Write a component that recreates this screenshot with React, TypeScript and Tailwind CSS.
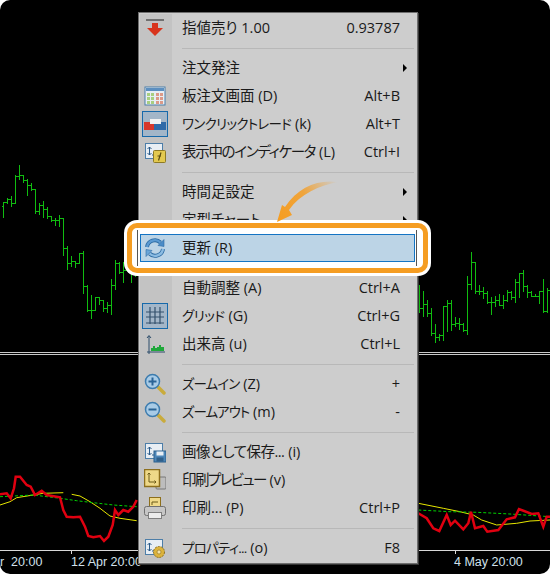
const FONT = { fontFamily: '"Open Sans", "Noto Sans CJK JP", sans-serif' };
const AXIS_FONT = { fontFamily: '"Liberation Sans", sans-serif' };

// [x in crop px, high, low, close] read off the chart, crop px are 3x
const LEFT_BARS = [
  [10, 155, 203, 157], [22, 145, 163, 148], [34, 138, 170, 161], [46, 76, 163, 78], [58, 45, 90, 76],
  [70, 76, 98, 90], [82, 88, 137, 105], [94, 100, 122, 118], [106, 118, 193, 183], [118, 160, 195, 165],
  [130, 153, 203, 178], [142, 172, 208, 200], [154, 198, 215, 212], [166, 205, 228, 210], [178, 196, 232, 205],
  [190, 205, 317, 295], [202, 288, 360, 340], [214, 318, 350, 335], [226, 335, 353, 340], [238, 310, 342, 310],
  [250, 303, 432, 408], [262, 405, 485, 482], [274, 435, 507, 482], [286, 441, 482, 442], [298, 441, 465, 450],
  [310, 450, 485, 475], [322, 456, 490, 466], [334, 388, 495, 406], [346, 330, 420, 340], [358, 337, 372, 367],
  [370, 336, 398, 362], [382, 350, 365, 362], [394, 362, 398, 365], [406, 360, 380, 370],
];
const RIGHT_BARS = [
  [28, 195, 278, 265], [40, 213, 290, 252], [52, 240, 292, 280], [64, 264, 348, 340], [76, 312, 368, 352],
  [88, 342, 362, 346], [100, 258, 362, 260], [112, 240, 335, 250], [124, 240, 332, 313], [136, 292, 322, 310],
  [148, 294, 330, 312], [160, 310, 335, 332], [172, 168, 345, 193], [184, 96, 210, 126], [196, 126, 222, 214],
  [208, 196, 226, 214], [220, 202, 238, 220], [232, 214, 252, 248], [244, 232, 285, 248], [256, 228, 260, 240],
  [268, 222, 258, 256], [280, 226, 267, 240], [292, 210, 245, 218], [304, 212, 240, 232], [316, 178, 250, 188],
  [328, 160, 235, 160], [340, 150, 215, 198], [352, 196, 234, 218], [364, 214, 232, 228], [376, 222, 232, 228],
  [388, 212, 252, 214], [400, 178, 280, 275], [412, 205, 280, 212],
];

const toLeft = (pts: number[][]) => pts.map(([x, y]) => `${(x / 3).toFixed(1)},${(460 + y / 3).toFixed(1)}`).join(" ");
const toRight = (pts: number[][]) => pts.map(([x, y]) => `${(410 + x / 3).toFixed(1)},${(460 + y / 3).toFixed(1)}`).join(" ");

function Bars({ data, ox, oy }: { data: number[][]; ox: number; oy: number }) {
  return (
    <g stroke="#10bc10" strokeWidth="1" fill="none" shapeRendering="crispEdges">
      {data.map(([x, hi, lo, close], i) => {
        const px = Math.floor(ox + x / 3) + 0.5;
        const open = i > 0 ? data[i - 1][3] : close + 12;
        return (
          <g key={x}>
            <path d={`M${px} ${oy + hi / 3}V${oy + lo / 3}`} />
            <path d={`M${px - 2} ${Math.floor(oy + open / 3) + 0.5}H${px}M${px} ${Math.floor(oy + close / 3) + 0.5}H${px + 2}`} />
          </g>
        );
      })}
    </g>
  );
}

function Chart() {
  return (
    <svg className="block" width="550" height="574" viewBox="0 0 550 574">
      <Bars data={LEFT_BARS} ox={0} oy={150} />
      <Bars data={RIGHT_BARS} ox={410} oy={220} />
      <path d="M0 352.5H550M0 354.5H550" stroke="#c8c8c8" strokeWidth="1" shapeRendering="crispEdges" />
      <g fill="none">
        <polyline points={toLeft([[0, 135], [30, 125], [50, 113], [100, 105], [130, 100], [190, 98]])} stroke="#e6e600" strokeWidth="1" />
        <polyline points={toLeft([[215, 103], [240, 108], [270, 125], [300, 145], [330, 168], [360, 175], [410, 182]])} stroke="#e6e600" strokeWidth="1" />
        <polyline points={toRight([[25, 130], [100, 145], [150, 155], [190, 165], [215, 180], [260, 195], [320, 190], [360, 183], [420, 180]])} stroke="#e6e600" strokeWidth="1" />
        <polyline points={toLeft([[0, 110], [100, 105], [180, 115], [230, 122], [280, 128], [340, 135], [410, 140]])} stroke="#00d000" strokeWidth="1" strokeDasharray="3 2" />
        <polyline points={toRight([[25, 150], [120, 155], [200, 157], [300, 162], [420, 170]])} stroke="#00d000" strokeWidth="1" strokeDasharray="3 2" />
        <polyline
          points={toLeft([[0, 103], [20, 100], [32, 115], [42, 85], [47, 50], [60, 50], [80, 75], [92, 80], [105, 105], [125, 92], [140, 105], [180, 112], [190, 150], [200, 170], [220, 172], [240, 170], [255, 200], [265, 228], [280, 232], [300, 228], [312, 243], [325, 230], [338, 195], [345, 150], [355, 165], [370, 150], [385, 155], [400, 140], [410, 120]])}
          stroke="#e00010"
          strokeWidth="2.5"
        />
        <polyline
          points={toRight([[25, 160], [50, 175], [70, 205], [88, 213], [110, 165], [122, 195], [135, 182], [160, 208], [175, 190], [183, 155], [195, 205], [220, 198], [232, 215], [265, 210], [290, 178], [315, 172], [327, 147], [365, 162], [385, 160], [400, 200], [410, 170], [420, 170]])}
          stroke="#e00010"
          strokeWidth="2.5"
        />
      </g>
      <path d="M0 550.5H550M71.5 550V554M455.5 550V554" stroke="#d8d8d8" strokeWidth="1" shapeRendering="crispEdges" />
    </svg>
  );
}

function Icon({ children, boxed = false }: { children?: React.ReactNode; boxed?: boolean }) {
  return (
    <div className={`flex h-[26px] w-[26px] items-center justify-center ${boxed ? "border border-[#1769aa] bg-[#a3b6c8]" : ""}`}>
      <svg width="22" height="22" viewBox="0 0 22 22">{children}</svg>
    </div>
  );
}

const SellIcon = () => (
  <>
    <path d="M2 3H20" stroke="#555" strokeWidth="1.5" />
    <path d="M8 6H14V11H19L11 19L3 11H8Z" fill="#d8341c" />
  </>
);
const DomIcon = () => (
  <>
    <rect x="1" y="2" width="20" height="18" fill="#e8eef4" stroke="#4d7ea8" />
    <rect x="2" y="3" width="18" height="3" fill="#5c8fc0" />
    <path d="M3 8h3v3h-3zM7 8h3v3h-3zM3 12h3v3h-3zM7 12h3v3h-3zM3 16h3v3h-3zM7 16h3v3h-3z" fill="#a8cf80" />
    <path d="M12 8h3v3h-3zM16 8h3v3h-3zM12 12h3v3h-3zM16 12h3v3h-3zM12 16h3v3h-3zM16 16h3v3h-3z" fill="#dc9a88" />
  </>
);
const OneClickIcon = () => (
  <>
    <rect x="0" y="9" width="10" height="8" fill="#d8382c" />
    <rect x="10" y="9" width="12" height="8" fill="#2f6aa8" />
    <rect x="6" y="6" width="11" height="5" fill="#f2f2f2" />
  </>
);
const ChartDoc = () => (
  <>
    <rect x="1.500" y="2.500" width="17" height="15" fill="#e8eef4" stroke="#4d7ea8" />
    <path d="M5.500 6V14M3.500 8L5.500 6L7.500 8M3.500 12L5.500 14L7.500 12M8 14H14" fill="none" stroke="#2a5a88" strokeWidth="1" />
  </>
);
const IndicatorIcon = () => (
  <>
    <ChartDoc />
    <rect x="9.500" y="9.500" width="12" height="12" rx="1" fill="#e3c94f" stroke="#8d7a26" />
    <path d="M17 11.500L14.500 19.500M13.500 15H17" stroke="#5c4d10" strokeWidth="1.200" fill="none" />
  </>
);
const RefreshIcon = () => (
  <g fill="none" strokeLinecap="butt">
    <path d="M3 10A8 8 0 0 1 16.500 5.500" stroke="#2b6aa2" strokeWidth="4" />
    <path d="M3 10A8 8 0 0 1 16.500 5.500" stroke="#5b9ad2" strokeWidth="2.400" />
    <path d="M14 8.500L20 2.500V9.500Z" fill="#4a8cc8" stroke="#2b6aa2" strokeWidth="0.600" />
    <path d="M19 12A8 8 0 0 1 5.500 16.500" stroke="#2b6aa2" strokeWidth="4" />
    <path d="M19 12A8 8 0 0 1 5.500 16.500" stroke="#8cbce2" strokeWidth="2.400" />
    <path d="M8 13.500L2 19.500V12.500Z" fill="#6aa6d8" stroke="#2b6aa2" strokeWidth="0.600" />
  </g>
);
const GridIcon = () => (
  <path d="M6 2V19M11 2V19M16 2V19M2 7H20M2 12H20M2 18H20" stroke="#34506c" strokeWidth="1.200" fill="none" />
);
const VolumeIcon = () => (
  <>
    <path d="M3 19H21M5 3V21M3 5L5 2.500L7 5" stroke="#2d4d6a" strokeWidth="1" fill="none" />
    <path d="M7 18V15H9V13H11V15H13V14H15V12H17V14H20V18Z" fill="#1fa83a" />
  </>
);
const ZoomIcon = ({ plus }: { plus?: boolean }) => (
  <>
    <path d="M13 13L20 20" stroke="#c9ab3c" strokeWidth="3.500" strokeLinecap="round" />
    <circle cx="8.500" cy="8.500" r="7" fill="#a8cbe6" stroke="#3d7cae" strokeWidth="1.500" />
    <path d={plus ? "M4.500 8.500H12.500M8.500 4.500V12.500" : "M4.500 8.500H12.500"} stroke="#2a6496" strokeWidth="2" />
  </>
);
const SaveIcon = () => (
  <>
    <ChartDoc />
    <rect x="10" y="10" width="12" height="11" fill="#4d86b8" stroke="#2b5f8c" />
    <rect x="12.500" y="10.500" width="7" height="4" fill="#e8eef4" />
    <rect x="12.500" y="16.500" width="7" height="4" fill="#2f5f8a" />
  </>
);
const PreviewIcon = () => (
  <>
    <rect x="12" y="8" width="10" height="12" rx="1" fill="#bdbdbd" stroke="#777" />
    <rect x="0.500" y="0.500" width="15" height="17" fill="#efd988" stroke="#8d6f1c" strokeWidth="1.500" />
    <path d="M5 4V13H12M3.500 5.500L5 4L6.500 5.500M10.500 11.500L12 13L10.500 14.500" stroke="#6b5a18" fill="none" />
  </>
);
const PrintIcon = () => (
  <>
    <rect x="5.500" y="0.500" width="11" height="11" fill="#efd988" stroke="#8d6f1c" />
    <path d="M8 5H14M8 5V8" stroke="#6b5a18" />
    <rect x="0.500" y="9.500" width="21" height="9" rx="2" fill="#c6c6c6" stroke="#707070" />
    <rect x="4.500" y="15.500" width="13" height="6" fill="#ececec" stroke="#7f7f7f" />
  </>
);
const PropsIcon = () => (
  <>
    <ChartDoc />
    <circle cx="15" cy="15" r="5.500" fill="#dcb33c" stroke="#8d6f1c" strokeDasharray="2 1" />
    <circle cx="15" cy="15" r="2" fill="#f3e3a8" stroke="#8d6f1c" strokeWidth="0.600" />
  </>
);

function Row({
  icon,
  label,
  right,
  arrow,
  boxed,
  tight = "",
}: {
  icon?: React.ReactNode;
  label: string;
  right?: string;
  arrow?: boolean;
  boxed?: boolean;
  tight?: string;
}) {
  // kana in the reference font run narrower, so only the Japanese part is tightened
  const [main, key] = label.split(" (");
  return (
    <div className="flex h-[28px] items-center">
      <div className="flex w-[31px] shrink-0 items-center justify-center">
        {icon && <Icon boxed={boxed}>{icon}</Icon>}
      </div>
      <span className="ml-[12px] flex-1 whitespace-nowrap">
        <span className={tight}>{main}</span>
        {key && ` (${key}`}
      </span>
      {right && <span className="mr-[17px] whitespace-nowrap">{right}</span>}
      {arrow && <span className="mr-[10px] h-0 w-0 border-y-[4px] border-l-[4px] border-y-transparent border-l-black" />}
    </div>
  );
}

function Sep({ h = "h-[12px]" }: { h?: string }) {
  return (
    <div className={`flex ${h} items-center pl-[43px] pr-[3px]`}>
      <div className="h-px w-full bg-[#b8b8b8]" />
    </div>
  );
}

function RefreshRow() {
  return (
    <div className="relative h-[28px]">
      {/* orange callout sits behind the selected row */}
      <div className="absolute left-[-12px] right-[-11px] top-[-11px] bottom-[-11px] rounded-[10px] border-[5px] border-[#f59d22] bg-white shadow-[0_0_0_3px_#ffffff]" />
      <div className="absolute inset-y-[-4px] left-[-2px] right-[0px] border-x border-[#555]" />
      <div className="absolute inset-y-0 left-[1px] right-[2px] border border-[#1474c4] bg-[#bcd4e6]" />
      <div className="relative">
        <Row icon={<RefreshIcon />} label="更新 (R)" />
      </div>
    </div>
  );
}

function Callout() {
  return (
    <svg className="absolute left-[131px] top-[162px]" width="74" height="56" viewBox="0 0 74 56">
      <defs>
        <linearGradient id="tail" x1="68" y1="7" x2="10" y2="45" gradientUnits="userSpaceOnUse">
          <stop offset="0" stopColor="#f59d22" stopOpacity="0" />
          <stop offset="0.5" stopColor="#f59d22" stopOpacity="0.85" />
          <stop offset="1" stopColor="#f59d22" />
        </linearGradient>
      </defs>
      <path d="M68 7C48 4 28 12 15 32L12 30L7 47L22 40L19 35C30 19 50 10 68 7Z" fill="url(#tail)" />
    </svg>
  );
}

export default function App() {
  return (
    <div className="h-[574px] w-[550px] overflow-hidden bg-white" style={FONT}>
      <div className="relative h-[574px] w-[550px] overflow-hidden rounded-[10px] bg-black">
        <Chart />
        <span className="absolute left-0 top-[553px] text-[12.5px] leading-[18px] text-[#d0e0ec]" style={AXIS_FONT}>r&nbsp;&nbsp;20:00</span>
        <span className="absolute left-[71px] top-[553px] whitespace-nowrap text-[12.5px] leading-[18px] text-[#d0e0ec]" style={AXIS_FONT}>12 Apr 20:00</span>
        <span className="absolute left-[454px] top-[553px] whitespace-nowrap text-[12.5px] leading-[18px] text-[#d0e0ec]" style={AXIS_FONT}>4 May 20:00</span>

        <div className="absolute left-[138px] top-[12px] h-[552px] w-[280px] border border-[#6e6e6e] bg-[#cdcdcd] pt-[1px] text-[14.5px] leading-none text-[#1a1a1a] [font-feature-settings:'palt'] shadow-[1px_1px_0_#333]">
          <div className="absolute inset-y-[1px] left-[1px] w-[32px] bg-[#c3c3c3]" />
          <div className="relative">
            <Row icon={<SellIcon />} label="指値売り 1.00" right="0.93787" />
            <Sep />
            <Row label="注文発注" arrow />
            <Row icon={<DomIcon />} label="板注文画面 (D)" right="Alt+B" />
            <Row icon={<OneClickIcon />} label="ワンクリックトレード (k)" right="Alt+T" boxed tight="text-[13.5px] tracking-[-0.7px]" />
            <Row icon={<IndicatorIcon />} label="表示中のインディケータ (L)" right="Ctrl+I" tight="tracking-[-1.3px]" />
            <Sep />
            <Row label="時間足設定" arrow />
            <Row label="定型チャート" arrow />
            <RefreshRow />
            <Sep />
            <div className="relative">
              <Row label="自動調整 (A)" right="Ctrl+A" />
              <Row icon={<GridIcon />} label="グリッド (G)" right="Ctrl+G" boxed tight="text-[13.5px] tracking-[-0.5px]" />
              <Row icon={<VolumeIcon />} label="出来高 (u)" right="Ctrl+L" />
              <Sep />
              <Row icon={<ZoomIcon plus />} label="ズームイン (Z)" right="+" tight="text-[13.5px] tracking-[-0.9px]" />
              <Row icon={<ZoomIcon />} label="ズームアウト (m)" right="-" tight="text-[13.5px] tracking-[-1px]" />
              <Sep />
              <Row icon={<SaveIcon />} label="画像として保存... (i)" tight="tracking-[-0.5px]" />
              <Row icon={<PreviewIcon />} label="印刷プレビュー (v)" tight="tracking-[-1.6px]" />
              <Row icon={<PrintIcon />} label="印刷... (P)" right="Ctrl+P" />
              <Sep />
              <Row icon={<PropsIcon />} label="プロパティ... (o)" right="F8" tight="text-[13.5px] tracking-[-0.8px]" />
            </div>
          </div>
          <Callout />
        </div>
      </div>
    </div>
  );
}
